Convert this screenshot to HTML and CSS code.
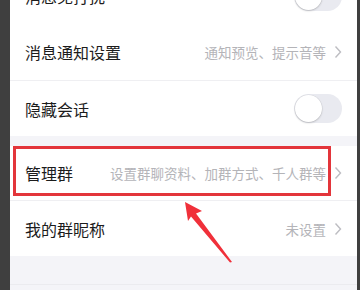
FILE: index.html
```html
<!DOCTYPE html>
<html>
<head>
<meta charset="utf-8">
<link rel="stylesheet" href="styles.css">
</head>
<body>
<div class="frame">
  <div class="edge-left"></div>
  <div class="main">
    <div class="list">
      <div class="group">
        <div class="row">
          <span class="label">消息免打扰</span>
          <span class="toggle"><span class="knob"></span></span>
        </div>
        <div class="row">
          <span class="label">消息通知设置</span>
          <span class="value">通知预览、提示音等</span>
          <svg class="chev" width="8" height="14" viewBox="0 0 8 14"><polyline points="1.5,1.5 6.5,7 1.5,12.5" fill="none" stroke="#bdbdc2" stroke-width="1.4"/></svg>
        </div>
        <div class="row divided">
          <span class="label">隐藏会话</span>
          <span class="toggle"><span class="knob"></span></span>
        </div>
      </div>
      <div class="gap"></div>
      <div class="group">
        <div class="row short highlighted">
          <span class="label">管理群</span>
          <span class="value">设置群聊资料、加群方式、千人群等</span>
          <svg class="chev" width="8" height="14" viewBox="0 0 8 14"><polyline points="1.5,1.5 6.5,7 1.5,12.5" fill="none" stroke="#bdbdc2" stroke-width="1.4"/></svg>
          <div class="redbox"></div>
        </div>
        <div class="row divided">
          <span class="label">我的群昵称</span>
          <span class="value">未设置</span>
          <svg class="chev" width="8" height="14" viewBox="0 0 8 14"><polyline points="1.5,1.5 6.5,7 1.5,12.5" fill="none" stroke="#bdbdc2" stroke-width="1.4"/></svg>
        </div>
      </div>
      <div class="footer"></div>
    </div>
  </div>
  <div class="edge-right"></div>
  <svg class="arrow" width="360" height="290" viewBox="0 0 360 290">
    <polygon points="185,202 202,211 196,213.5 232,262 230,262.5 191,216.5 188,221" fill="#f0303a"/>
  </svg>
</div>
</body>
</html>
```

FILE: styles.css
```css
html, body {
  margin: 0;
  padding: 0;
}
body {
  width: 360px;
  height: 290px;
  overflow: hidden;
  background: #3f3f3f;
  font-family: "Noto Sans CJK SC", "Noto Sans", sans-serif;
}
.frame {
  position: relative;
  display: flex;
  width: 360px;
  height: 290px;
}
.edge-left {
  width: 10px;
  background: #3f3f3f;
}
.edge-right {
  width: 3px;
  background: #3f3f3f;
}
.main {
  flex: 1;
  background: #f4f4f8;
  overflow: hidden;
}
.list {
  margin-top: -32px;
}
.group {
  background: #ffffff;
}
.row {
  position: relative;
  display: flex;
  align-items: center;
  height: 56px;
  padding: 0 15px 0 15px;
  box-sizing: border-box;
}
.row.short {
  height: 54px;
}
.row.divided {
  border-top: 1px solid #efeff2;
}
.label {
  flex: 1;
  font-size: 16px;
  color: #1c1c1c;
  white-space: nowrap;
}
.value {
  font-size: 13.5px;
  color: #b4b4b8;
  white-space: nowrap;
  margin-right: 8px;
}
.chev {
  display: block;
  flex: none;
}
.toggle {
  position: relative;
  width: 48px;
  height: 29px;
  border-radius: 15px;
  background: #e9eaf0;
  flex: none;
}
.knob {
  position: absolute;
  left: 1px;
  top: 1px;
  width: 27px;
  height: 27px;
  border-radius: 50%;
  background: #ffffff;
  box-shadow: 0 1px 2px rgba(0,0,0,0.18), 0 0 0 0.5px rgba(0,0,0,0.06);
}
.gap {
  height: 10px;
}
.footer {
  height: 28px;
  border-bottom: 1px solid #ebebef;
}
.redbox {
  position: absolute;
  left: 3px;
  top: 0;
  width: 318px;
  height: 50px;
  box-sizing: border-box;
  border: 3px solid #e3353b;
}
.arrow {
  position: absolute;
  left: 0;
  top: 0;
  pointer-events: none;
}
```
